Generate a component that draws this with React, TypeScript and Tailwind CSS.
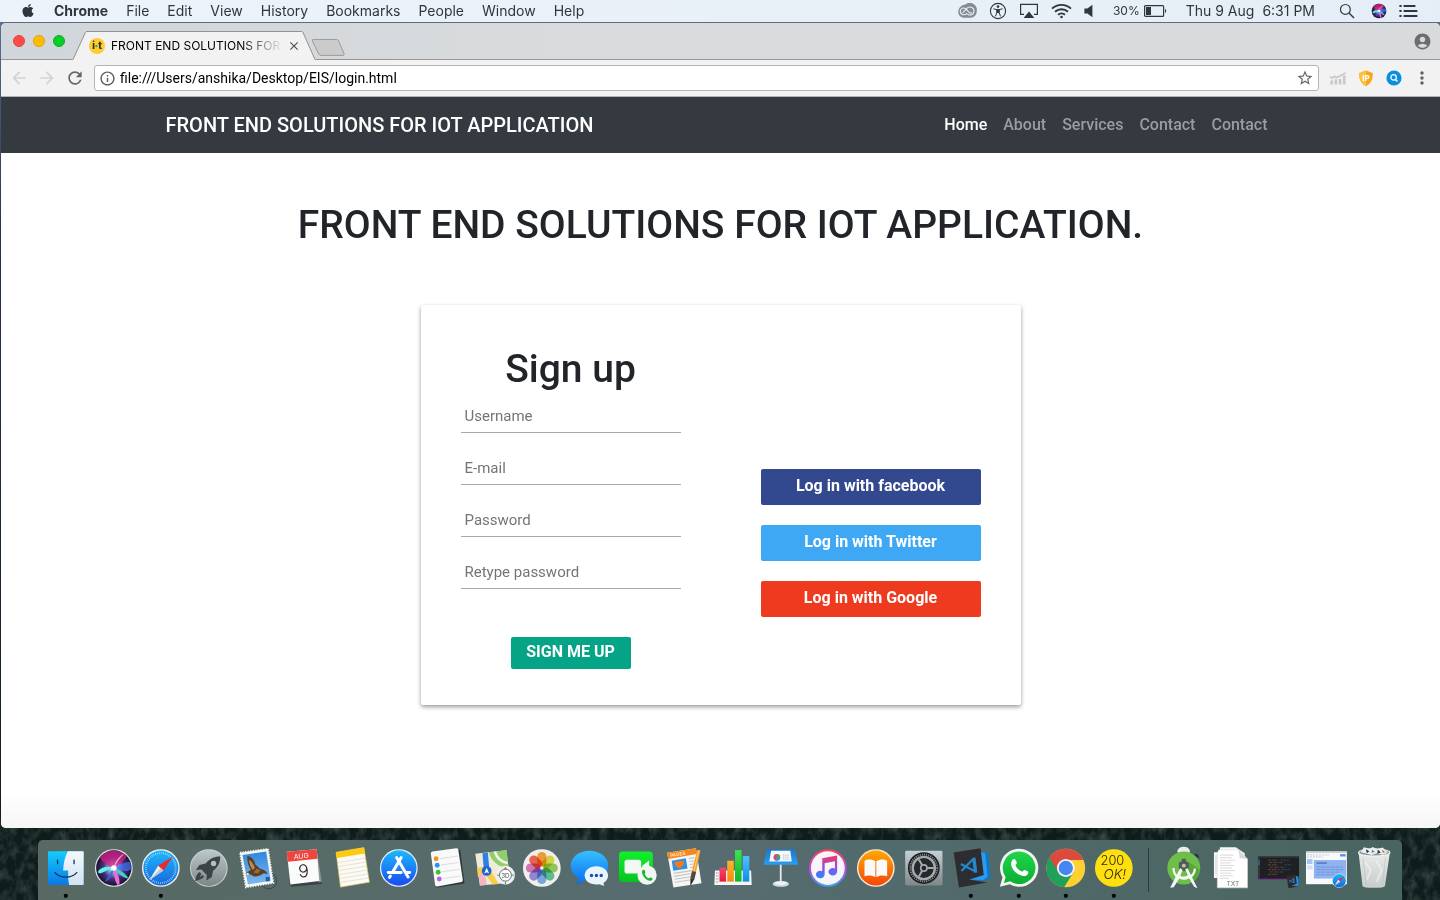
import type { ReactNode } from "react";
import { FaApple } from "react-icons/fa";
import {
  MdAccountCircle,
  MdArrowBack,
  MdArrowForward,
  MdClose,
  MdInfoOutline,
  MdMoreVert,
  MdRefresh,
  MdStarBorder,
} from "react-icons/md";

/* ---------- shared gradients ---------- */

function Grad({ id, stops }: { id: string; stops: string[] }) {
  return (
    <linearGradient id={id} x1="0" y1="0" x2="0" y2="1">
      {stops.map((c, i) => (
        <stop key={c + i} offset={i / (stops.length - 1)} stopColor={c} />
      ))}
    </linearGradient>
  );
}

function Defs() {
  return (
    <svg width="0" height="0" className="absolute" aria-hidden="true">
      <defs>
        <Grad id="finderL" stops={["#12cdff", "#0a78e4"]} />
        <Grad id="finderR" stops={["#f4f8fc", "#d3e2f3"]} />
        <Grad id="safari" stops={["#1fb6fb", "#1668dc"]} />
        <Grad id="silver" stops={["#bcc7cb", "#7d8687"]} />
        <Grad id="sky" stops={["#2f86dd", "#7fb9ee"]} />
        <Grad id="store" stops={["#1bb8fd", "#1b4bf0"]} />
        <Grad id="msg" stops={["#35c0ff", "#0a6cf0"]} />
        <Grad id="ft" stops={["#12ef2e", "#07c41f"]} />
        <Grad id="pink" stops={["#f5486d", "#e6173c"]} />
        <Grad id="amber" stops={["#ffb52e", "#f38b0d"]} />
        <Grad id="green" stops={["#3de34e", "#0fb32e"]} />
        <Grad id="azure" stops={["#4fc4ff", "#0f8ae8"]} />
        <Grad id="board" stops={["#1878cf", "#2b9cf0"]} />
        <Grad id="books" stops={["#ffa800", "#f4470b"]} />
        <Grad id="prefs" stops={["#c5d0d6", "#80878a"]} />
        <Grad id="wa" stops={["#1fd64a", "#0cae32"]} />
        <Grad id="note" stops={["#f23a5c", "#9b49e8", "#1f8df5"]} />
        <Grad id="ring" stops={["#f4425b", "#c344e0", "#38a6f5"]} />
        <Grad id="trash" stops={["#e8eaea", "#c9cccc"]} />
        <radialGradient id="siriDisc">
          <stop offset="0" stopColor="#ffffff" />
          <stop offset="0.22" stopColor="#9fc5f0" />
          <stop offset="0.6" stopColor="#4a2f7c" />
          <stop offset="1" stopColor="#15142c" />
        </radialGradient>
        <clipPath id="siriClip">
          <circle cx="24" cy="28" r="17.4" />
        </clipPath>
        <clipPath id="chromeClip">
          <circle cx="24" cy="28" r="19.5" />
        </clipPath>
      </defs>
    </svg>
  );
}

/* ---------- reusable drawings ---------- */

function SiriOrb() {
  return (
    <>
      <circle cx="24" cy="28" r="19" fill="#e4e1ea" />
      <circle cx="24" cy="28" r="17.8" fill="url(#siriDisc)" />
      <g clipPath="url(#siriClip)">
        <path d="M24 28C17 26 9 20 8 12C16 7 32 7 38 15C34 21 29 26 24 28Z" fill="#d81f86" opacity=".75" />
        <path d="M24 28C32 24 40 19 43 24C43 32 36 33 24 28Z" fill="#3b6df0" opacity=".75" />
        <path d="M24 28C16 30 9 36 8 32C10 27 17 26 24 28Z" fill="#5ff3e6" />
        <path d="M24 28C24 36 25 42 29 47C31 42 29 34 24 28Z" fill="#f26ad6" />
        <path d="M24 28C30 30 36 33 39 39C33 38 27 33 24 28Z" fill="#3fd0c9" />
        <path d="M24 28C20 33 17 37 15 42C21 40 24 34 24 28Z" fill="#3a63d8" opacity=".8" />
        <path d="M24 28C27 22 30 18 35 13C31 15 25 20 24 28Z" fill="#fff" opacity=".6" />
      </g>
      <circle cx="24" cy="28" r="2.8" fill="#fff" />
    </>
  );
}

function Compass({ ticks = true }: { ticks?: boolean }) {
  return (
    <>
      <circle cx="24" cy="28" r="19" fill="#eef1f4" />
      <circle cx="24" cy="28" r="17.6" fill="url(#safari)" />
      {ticks && (
        <circle cx="24" cy="28" r="15" fill="none" stroke="#cfeaff" strokeWidth="2" strokeDasharray="0.6 1.36" />
      )}
      <path d="M36 16.5L21.3 25.6L26.6 30.6Z" fill="#f3262c" />
      <path d="M12.5 40L21.3 25.6L26.6 30.6Z" fill="#f2f2f2" />
      <path d="M12.5 40L24 28L26.6 30.6Z" fill="#c5c9cc" />
    </>
  );
}

function CodeMark() {
  return (
    <>
      <path d="M33.5 11.8L41.5 12L43.9 36.5L43 38.8L35.5 41L23 40L35.3 35.5Z" fill="#1177c4" />
      <path d="M6.7 12.3L33.7 8L39.8 37L35.3 36.5L22 39.6L40.7 42.7L12 47.7Z" fill="#2d2d31" />
      <path d="M34.3 11.8L38.5 13L41 37L36.5 40L23 39.6L37 35Z" fill="#2b9af0" />
      <g fill="none" stroke="#2489ca" strokeLinejoin="round">
        <path d="M27 17.6L28.8 32.6" strokeWidth="3.4" />
        <path d="M26.6 18.6L14.6 31M14 24L28.4 31.4" strokeWidth="2.2" />
      </g>
    </>
  );
}

/* ---------- dock artwork, drawn on a 48 x 60 grid ---------- */

const petals = ["#fb9a1f", "#d9dd2d", "#8ecb4a", "#4fbf8d", "#6ea6e6", "#8a7fd6", "#d76bb4", "#f2573c"];
const angles8 = [0, 45, 90, 135, 180, 225, 270, 315];
const angles3 = [0, 120, 240];

type DockItem = { name: string; running?: boolean; art: ReactNode };

const apps: DockItem[] = [
  {
    name: "Finder",
    running: true,
    art: (
      <>
        <rect x="6" y="11" width="36" height="34" rx="1" fill="url(#finderL)" />
        <path d="M26 11H41Q42 11 42 12V44Q42 45 41 45H27.3C26.4 41 26.2 35 26.4 30.5H21.3C21.5 23 23.4 16 26 11Z" fill="url(#finderR)" />
        <path d="M15.7 20V23.6M32.3 20V23.6" stroke="#16324f" strokeWidth="1.3" strokeLinecap="round" />
        <path d="M13 32.6C18.5 38.8 29.5 38.8 35 32.6" stroke="#16324f" strokeWidth="1.3" fill="none" strokeLinecap="round" />
      </>
    ),
  },
  { name: "Siri", art: <SiriOrb /> },
  { name: "Safari", running: true, art: <Compass /> },
  {
    name: "Launchpad",
    art: (
      <>
        <circle cx="24" cy="28" r="19" fill="#c9d3d6" />
        <circle cx="24" cy="28" r="18" fill="url(#silver)" />
        <path d="M35.5 16.5C29 16.5 24.5 19 21 23.5L14.5 25L11 30L16.5 29.5L22 35L21.5 40.5L27 37L28.2 31C33 27.5 35.5 23 35.5 16.5Z" fill="#3d4346" />
        <circle cx="28.8" cy="23.4" r="2.7" fill="#b5bfc2" />
        <path d="M14.6 32C12 33.5 11 36.5 10.2 41C14.5 40.2 17.5 39 19.2 36.5L17.6 35L14.8 37.2L16.4 33.6Z" fill="#3d4346" />
      </>
    ),
  },
  {
    name: "Mail",
    art: (
      <>
        <circle cx="36" cy="41" r="8" fill="none" stroke="#394c49" strokeWidth="1" />
        <path d="M7 12.5L35.3 8.7L40.6 43L13 47.5Z" fill="#f6f7f7" stroke="#f6f7f7" strokeWidth="1.8" strokeDasharray="1.3 1.3" />
        <path d="M9.5 14.8L33.4 11.3L38 40.8L15 44.6Z" fill="url(#sky)" />
        <path d="M14.5 16C19 16.5 21.5 20 22.6 24.6C24.6 25.6 26 28 28 29C31 29.6 33.4 31 35 34L31 33.4C28.6 34.4 26.6 36.4 23 36.6C20 36.4 18 34.4 16 34L13.5 35.5L13.6 32.5L18 30C15.4 25.6 14 21 14.5 16Z" fill="#5c3f22" />
        <path d="M16 19.6C19 21.6 21 24 22 28L20 30C17.6 27 16.4 23.6 16 19.6Z" fill="#b98c56" />
        <path d="M24 28.4L27.6 30.4L25 33.6L20.5 32.6Z" fill="#9b6b36" />
        <circle cx="14.8" cy="34" r="1.2" fill="#f2ead8" />
        <rect x="33" y="37" width="4" height="4.4" fill="#2459a6" />
      </>
    ),
  },
  {
    name: "Calendar",
    art: (
      <>
        <path d="M9 43L38.5 39.5L42.4 41.8L41.8 44L11.4 47Z" fill="#384447" />
        <path d="M37 9.5L42 41.5L39 42.5L35 12Z" fill="#8d9698" />
        <path d="M6.8 11.6L37 9.2L39.6 41L10.5 44.6Z" fill="#fbfbfb" />
        <path d="M6.8 11.6L37 9.2L37.8 18.6L7.8 21.6Z" fill="#f0443d" />
        <g transform="rotate(-5 23 28)">
          <text x="22.4" y="18.4" textAnchor="middle" fontFamily="Inter, sans-serif" fontSize="7" fill="#fff">AUG</text>
          <text x="23.5" y="37.4" textAnchor="middle" fontFamily="Inter, sans-serif" fontSize="18" fontWeight="300" fill="#222">9</text>
        </g>
      </>
    ),
  },
  {
    name: "Notes",
    art: (
      <>
        <path d="M8 12L36.2 7.3L41.8 42.3L12.5 47.3Z" fill="#fbfaf3" stroke="#d8b13a" strokeWidth=".6" />
        <path d="M8 12L36.2 7.3L37.2 13.4L8.9 17.8Z" fill="#fccb12" />
        <path d="M10 22.5L37.8 18M10.6 26.5L38.5 22M11.2 30.5L39.2 26M11.8 34.5L39.8 30M12.3 38.5L40.4 34M12.9 42.5L41 38" stroke="#dcd8ca" strokeWidth=".7" />
      </>
    ),
  },
  {
    name: "App Store",
    art: (
      <>
        <circle cx="24" cy="28" r="19" fill="#e9f4fc" />
        <circle cx="24" cy="28" r="17.8" fill="url(#store)" />
        <g stroke="#fff" strokeWidth="3" strokeLinecap="round" fill="none">
          <path d="M21.8 17.5L33.3 37" />
          <path d="M26.4 17.5L17.6 32.4" />
          <path d="M13.3 32.6H26.4M31.6 32.6H35" />
          <path d="M15.5 36L14.7 37.4" />
        </g>
      </>
    ),
  },
  {
    name: "Reminders",
    art: (
      <>
        <path d="M10 13.5L37.5 9.5L41.8 43.5L13.5 48Z" fill="#2e3a3b" />
        <path d="M9.5 11.3L33.5 8.1Q35.2 8 35.5 9.4L40.1 40.2Q40.3 41.8 38.8 42.1L14.4 46.6Q12.6 46.8 12.2 45.2L7.9 13.4Q7.7 11.6 9.5 11.3Z" fill="#fafafa" />
        <path d="M17 18.5L35 16M18 25L36 22.4M19 31.8L37 29.2M20 38.6L38 36" stroke="#cfcfcf" strokeWidth=".7" />
        <circle cx="13.2" cy="18.6" r="2.5" fill="#f7901e" />
        <circle cx="14.3" cy="25.3" r="2.5" fill="#1e9bf0" />
        <circle cx="15.3" cy="32.2" r="2.5" fill="#2ccb26" />
        <circle cx="16.4" cy="39" r="2.5" fill="#c35fe6" />
      </>
    ),
  },
  {
    name: "Maps",
    art: (
      <>
        <path d="M4.3 13.7L35.7 10L39.7 42.7L9 45.7Z" fill="#f0ead9" />
        <path d="M18 12.1L35.7 10L38 28C27 27 20 21 18 12.1Z" fill="#8ed16a" />
        <path d="M24 11.4C26 18 31 22 37 23" stroke="#f4f2ea" strokeWidth="2.6" fill="none" />
        <path d="M6 28L17 26L28 44L22 44.5L14 34L7 37Z" fill="#f9ce46" />
        <path d="M7.4 34L14 33L16 45L9 45.7Z" fill="#f5b6c4" />
        <path d="M11.5 13L17 12.3L18.5 29L13 30Z" fill="#2e7fe6" />
        <circle cx="15.8" cy="31" r="4.9" fill="#1d63d6" />
        <path d="M15.8 27.8L18.3 33.6L15.8 32.3L13.3 33.6Z" fill="#fff" />
        <circle cx="34.7" cy="35.2" r="9.5" fill="#eef0f0" />
        <circle cx="34.7" cy="35.2" r="6" fill="#fff" stroke="#586064" strokeWidth=".9" />
        <text x="34.7" y="37.6" textAnchor="middle" fontFamily="Inter, sans-serif" fontSize="6.4" fill="#4a5257">3D</text>
        <path d="M34.7 26.6L36 29.2H33.4Z" fill="#e23b2f" />
        <path d="M34.7 41.8V44M26.3 35.2H28M41.4 35.2H43.2" stroke="#4a5257" strokeWidth=".8" />
      </>
    ),
  },
  {
    name: "Photos",
    art: (
      <>
        <circle cx="24" cy="28" r="19" fill="#f1efee" />
        {angles8.map((a, i) => (
          <rect
            key={a}
            x="19.4"
            y="11.9"
            width="9.2"
            height="14.6"
            rx="4.6"
            fill={petals[i]}
            opacity=".88"
            className="mix-blend-multiply"
            transform={`rotate(${a} 24 28)`}
          />
        ))}
      </>
    ),
  },
  {
    name: "Messages",
    art: (
      <>
        <path d="M23.6 10.5C34.4 10.5 42.6 17 42.6 25.8S34.4 41.2 23.6 41.2C21.4 41.2 19.4 41 17.6 40.4C15.6 43 13 44.6 10.2 44.6C12 42.6 12.6 40.4 12.4 37.9C7.7 35.2 4.7 30.8 4.7 25.8C4.7 17 12.9 10.5 23.6 10.5Z" fill="url(#msg)" />
        <path d="M30.6 26.2C37.4 26.2 42.4 30.4 42.4 35.6C42.4 38.6 40.6 41.4 37.8 43C37.8 44.2 38 45 38.6 46C36.8 45.6 35.2 44.8 34.2 44.3C33 44.6 31.8 44.7 30.6 44.7C23.8 44.7 18.8 40.8 18.8 35.6S23.8 26.2 30.6 26.2Z" fill="#e9f3fd" />
        <circle cx="25.7" cy="35.5" r="1.7" fill="#1c4fa3" />
        <circle cx="30.6" cy="35.5" r="1.7" fill="#1c4fa3" />
        <circle cx="35.5" cy="35.5" r="1.7" fill="#1c4fa3" />
      </>
    ),
  },
  {
    name: "FaceTime",
    art: (
      <>
        <rect x="5" y="11.3" width="34.2" height="30.7" rx="3.6" fill="url(#ft)" />
        <rect x="10.6" y="19.6" width="16.8" height="14" rx="2.6" fill="#f4f8f4" />
        <path d="M28.6 25.4L35.4 20.4V33H28.6Z" fill="#f4f8f4" />
        <circle cx="33.3" cy="35.2" r="9.7" fill="#f3f5f3" />
        <path d="M28.4 30.8C29.6 29.2 30.6 29.6 31.4 31.4C32 32.6 30.6 33.2 31 34.2C31.8 36 32.8 37.2 34.6 38.2C35.6 38.6 36 37 37.2 37.6C39 38.4 39.4 39.2 38 40.4C34.6 43 27 35.4 28.4 30.8Z" fill="#12b52b" />
      </>
    ),
  },
  {
    name: "Pages",
    art: (
      <>
        <path d="M6.2 12.7L35.2 8L40.8 43.3L12.5 47.7Z" fill="#f5f5f3" />
        <path d="M6.2 12.7L35.2 8L36 14L7.2 18.8Z" fill="#f7861b" />
        <text x="9.5" y="17.2" fontFamily="Inter, sans-serif" fontSize="4.8" fontWeight="600" fill="#fde5cc" transform="rotate(-9 9 17)">PAGES</text>
        <path d="M10.8 20.6L25 18.2L26.7 28.4L12.4 30.7Z" fill="#2f8fe6" />
        <path d="M13.4 22L22.6 20.8L23.4 24L19 28.6L14.6 26Z" fill="#f47a1c" />
        <path d="M28 18.5L34 17.6M28.4 21.5L34.4 20.6M28.8 24.5L34.6 23.6M29.4 27.6L35 26.8M12.8 33.4L31 30.6M13.2 36.4L30.4 33.6M13.7 39.4L30 36.8M14.2 42.4L29 40" stroke="#c4c4c4" strokeWidth="1.1" />
        <path d="M36.6 9.6L39.9 10.3L33.6 39.4L29.6 38.4Z" fill="#f59a23" />
        <path d="M37.6 9.8L38.6 10L32 39L31 38.7Z" fill="#ffd185" />
        <path d="M29.6 38.4L33.6 39.4L29.6 46Z" fill="#2e2e2e" />
        <path d="M31.3 31L35.3 32L33.6 39.4L29.6 38.4Z" fill="#4a4a4a" />
      </>
    ),
  },
  {
    name: "Numbers",
    art: (
      <>
        <path d="M6 30.5H42.4L43 45H5.4Z" fill="#f5f5f5" />
        <path d="M7 33H10M7 36H10M7 39H10M7 42H10" stroke="#888" strokeWidth="1" strokeDasharray="1 .6" />
        <rect x="10.6" y="27.7" width="6.6" height="14" fill="url(#pink)" />
        <rect x="18.4" y="20.7" width="6.6" height="21" fill="url(#amber)" />
        <rect x="26.2" y="10" width="6.6" height="31.7" fill="url(#green)" />
        <rect x="34" y="16" width="6.6" height="25.7" fill="url(#azure)" />
      </>
    ),
  },
  {
    name: "Keynote",
    art: (
      <>
        <ellipse cx="24" cy="44" rx="8.2" ry="3" fill="#cfdbe6" />
        <ellipse cx="24" cy="43.2" rx="6" ry="1.8" fill="#eef4f8" />
        <rect x="23" y="24" width="1.8" height="19" fill="#e4eaee" />
        <path d="M9.8 9H38L41.3 23.4V24.8H6.9V23.4Z" fill="url(#board)" />
        <path d="M14.2 10.6H33.6L35 21.4H12.4Z" fill="#f8fafc" />
        <circle cx="20" cy="17.2" r="3.4" fill="#ec4063" />
        <path d="M20 17.2V13.8A3.4 3.4 0 0 1 23.2 18Z" fill="#39b54a" />
        <path d="M20 17.2L23.2 18A3.4 3.4 0 0 1 18 20Z" fill="#2d9cf0" />
        <path d="M26 15H32M26 17H32.4M26 19H32.8" stroke="#a9b7c2" strokeWidth=".8" strokeDasharray="1.6 .6" />
      </>
    ),
  },
  {
    name: "iTunes",
    art: (
      <>
        <circle cx="24" cy="28" r="19" fill="url(#ring)" />
        <circle cx="24" cy="28" r="17" fill="#f8f5f8" />
        <path d="M18.4 18.2L33.4 15.4V31.6A4.4 3.8 0 1 1 31.2 28.4V21.2L20.8 23.2V34.4A4.4 3.8 0 1 1 18.4 31.2Z" fill="url(#note)" />
      </>
    ),
  },
  {
    name: "iBooks",
    art: (
      <>
        <circle cx="24" cy="28" r="19" fill="#f7e9d8" />
        <circle cx="24" cy="28" r="17.6" fill="url(#books)" />
        <path d="M23.5 21.2C20.5 19 15.5 18.9 12.6 20.6V36.4C16 35 20.8 35.2 23.5 37.4Z" fill="#fafafa" />
        <path d="M24.5 21.2C27.5 19 32.5 18.9 35.4 20.6V36.4C32 35 27.2 35.2 24.5 37.4Z" fill="#fafafa" />
      </>
    ),
  },
  {
    name: "System Preferences",
    art: (
      <>
        <rect x="5.2" y="10.6" width="37.6" height="35" rx="1.4" fill="url(#prefs)" />
        <circle cx="24" cy="28" r="16" fill="#1d2022" />
        <circle cx="24" cy="28" r="13.6" fill="none" stroke="#8b9194" strokeWidth="1.8" strokeDasharray="1.1 1.1" />
        <circle cx="24" cy="28" r="11.2" fill="#26292b" stroke="#a5abae" strokeWidth="2.4" />
        {angles3.map((a) => (
          <path key={a} d="M24 28H34" stroke="#a5abae" strokeWidth="2" transform={`rotate(${a} 24 28)`} />
        ))}
        <circle cx="24" cy="28" r="3.2" fill="#24272a" stroke="#a5abae" strokeWidth="1.6" />
      </>
    ),
  },
  { name: "Visual Studio Code", running: true, art: <CodeMark /> },
  {
    name: "WhatsApp",
    running: true,
    art: (
      <>
        <path d="M24.2 8.6A19.2 19.2 0 1 1 14.8 44.4L4.9 47L7.6 37.4A19.2 19.2 0 0 1 24.2 8.6Z" fill="#f2f5f2" />
        <path d="M24.2 11.4A16.4 16.4 0 1 1 15.2 41.4L9 43L10.7 37A16.4 16.4 0 0 1 24.2 11.4Z" fill="url(#wa)" />
        <path d="M17.4 19.8C18.8 18.4 20.4 18.8 21.2 20.8C22.2 23.2 22.2 23.4 20.8 25C20.2 25.8 23.8 30.6 27.4 31.6C28 31.6 29 29.6 30 30C33.6 31.4 33.8 31.6 33.4 33.2C32.8 35.4 30.2 36.4 28 36C20.6 34.6 13.4 26 17.4 19.8Z" fill="#fff" />
      </>
    ),
  },
  {
    name: "Google Chrome",
    running: true,
    art: (
      <>
        <g clipPath="url(#chromeClip)">
          <rect x="4" y="8" width="40" height="40" fill="#fdd033" />
          <path d="M24 28L5 13L4 48H22L32 32Z" fill="#1fa15c" />
          <path d="M24 20H46V6H6V16L16.5 32Z" fill="#dc4a3d" />
          <path d="M24 28L16 32L5 14V40Z" fill="#1fa15c" />
        </g>
        <circle cx="24" cy="28" r="9" fill="#f5f5f5" />
        <circle cx="24" cy="28" r="7.2" fill="#4487f0" />
      </>
    ),
  },
  {
    name: "200 OK",
    running: true,
    art: (
      <>
        <circle cx="24" cy="28" r="19" fill="#ffdf0f" />
        <g fontFamily="Inter, sans-serif" fontWeight="300" fill="#2c2a12" textAnchor="middle">
          <text x="22.6" y="25" fontSize="13">200</text>
          <text x="25" y="39" fontSize="13.5" fontStyle="italic">OK!</text>
        </g>
      </>
    ),
  },
];

const shelf: DockItem[] = [
  {
    name: "Android Studio",
    art: (
      <>
        <path d="M17.5 11C18 8 21 6.6 24 6.6S29.6 8 30.2 11L28.6 15H19Z" fill="#e8ecea" />
        <path d="M34 13.6L38 14.4L39.8 17.6L36.4 17Z" fill="#262c46" />
        <circle cx="24" cy="28" r="16.6" fill="#6fbe48" />
        <path d="M24 28L29 22L40.4 30A16.6 16.6 0 0 1 31 43Z" fill="#4f9a37" opacity=".7" />
        <path d="M22 18.6H26V21L29 22.6V28.4L26 31H22L19 28.4V22.6L22 21Z" fill="#525a5c" />
        <circle cx="24" cy="25.6" r="2" fill="#a9cf95" />
        <path d="M20.4 28L10.2 48L13.8 47.4L19.4 38.6C22.6 40.4 26.2 40.2 29.2 38.2L34.4 47L37.8 48.4L27.6 28L25.4 29.6L28 35.4C25.6 37 22.6 37 20.4 35.8L22.8 30Z" fill="#f5f6f6" />
        <path d="M13.6 28C13.4 33 16 36.4 19.4 38.6M29.2 38.2C32.6 36 35 32 35.2 28.6" stroke="#f5f6f6" strokeWidth="2.2" fill="none" />
      </>
    ),
  },
  {
    name: "Documents",
    art: (
      <>
        <path d="M13 7H29L38 13V38H7V12H13Z" fill="#f7f7f7" />
        <path d="M12 9.6H31.6L40.8 19V48H10.4V12.6Z" fill="#fff" stroke="#d9d9d9" strokeWidth=".6" />
        <path d="M31.6 9.6L33 18L40.8 19Z" fill="#d8d8d8" />
        <path d="M13 15H27M13 17.6H25M13 20.2H28M13 22.8H24M13 25.4H27M13 28H25M13 30.6H28M13 33.2H24M13 35.8H26M13 38.4H22M9 15V34" stroke="#d4d4d4" strokeWidth=".9" />
        <text x="26" y="46" textAnchor="middle" fontFamily="Inter, sans-serif" fontSize="6.6" fill="#777">TXT</text>
      </>
    ),
  },
  {
    name: "Minimised editor window",
    art: (
      <>
        <rect x="3" y="16" width="41.4" height="24" fill="#1f2024" />
        <rect x="3" y="16" width="41.4" height="1.4" fill="#3b3c42" />
        <rect x="3" y="17.4" width="2" height="21.4" fill="#33353b" />
        <rect x="3" y="38.8" width="41.4" height="1.2" fill="#7c3a8f" />
        <path d="M13 20H24M14 22.4H28M13 24.8H22M15 27.2H30M13 29.6H25M15 32H28M13 34.4H22" stroke="#6f4a3e" strokeWidth=".8" strokeDasharray="3 1 5 1.4" />
        <path d="M26 20H34M30 24.8H37M27 29.6H36" stroke="#35597a" strokeWidth=".8" strokeDasharray="2 1" />
        <path d="M4 20V25" stroke="#3a7fc0" strokeWidth="1" />
        <g transform="translate(29.6 32.2) scale(.34)">
          <CodeMark />
        </g>
      </>
    ),
  },
  {
    name: "Minimised browser window",
    art: (
      <>
        <rect x="3" y="11.3" width="41.2" height="33" fill="#f7f9fc" />
        <rect x="3" y="11.3" width="41.2" height="1.6" fill="#cfcfcf" />
        <path d="M4 14.8H26M4 16.8H20" stroke="#b9bfca" strokeWidth=".8" strokeDasharray="2 1" />
        <rect x="37.4" y="14" width="5.6" height="2.4" fill="#5b8def" />
        <rect x="4" y="19" width="5.6" height="5" fill="#a8c3f5" />
        <rect x="4" y="25.4" width="5.6" height="4" fill="#d7e1f5" />
        <rect x="11" y="20" width="32.4" height="18.6" fill="#8fb2f2" />
        <path d="M13.6 23H24" stroke="#4a67a8" strokeWidth="1.2" />
        <path d="M13.6 27H40M13.6 29.6H41M13.6 32.2H38M13.6 34.8H40" stroke="#6d8dd0" strokeWidth=".8" strokeDasharray="4 .8" />
        <g transform="translate(27.4 30.2) scale(.38)">
          <Compass ticks={false} />
        </g>
      </>
    ),
  },
  {
    name: "Trash",
    art: (
      <>
        <path d="M8.6 12.4L12.6 46Q13.2 48 24 48T35.2 46L40.2 12.4Z" fill="url(#trash)" />
        <ellipse cx="24.4" cy="12.4" rx="15.8" ry="3.6" fill="#8c9494" stroke="#f1f3f3" strokeWidth="1.2" />
        <path d="M11 12L14 7L20 8.6L23 6.8L27 9L33 7.4L38 12.6L33 14.6L27 13L22 15L16 13.4Z" fill="#eceeee" />
        <path d="M16 9L19.4 11L17 13Z M28 9.4L31 12.4L27.6 13.6Z" fill="#2c3438" />
        <path d="M22.4 9.6L25 11.8L21.6 12.6Z" fill="#4a86b0" />
        <path d="M32.4 9.4L35.4 12L33 12.6Z" fill="#c9603b" />
        <path d="M13 18L16.4 45M35.8 18L32.6 45" stroke="#b4b8b8" strokeWidth=".8" opacity=".6" />
        <path d="M15 22L21 30L17 40M26 20L32 30L27 42" stroke="#f3f4f4" strokeWidth="2" fill="none" opacity=".6" />
      </>
    ),
  },
];

function DockIcon({ item }: { item: DockItem }) {
  return (
    <button type="button" aria-label={item.name} className="block min-w-0 flex-1">
      <svg viewBox="0 0 48 60" className="block h-[60px] w-full" aria-hidden="true">
        {item.art}
        {item.running && <circle cx="24" cy="56" r="2.1" fill="#000" />}
      </svg>
    </button>
  );
}

function Dock() {
  return (
    <nav
      aria-label="Dock"
      className="relative mx-[38px] mt-3 flex rounded-t-[5px] bg-linear-to-r from-[#576962] via-[#566c70] to-[#496560] px-1"
    >
      {apps.map((a) => (
        <DockIcon key={a.name} item={a} />
      ))}
      <div className="flex w-[22px] shrink-0 items-center justify-center">
        <span className="h-11 w-px bg-[#2c3d3b]" />
      </div>
      {shelf.map((a) => (
        <DockIcon key={a.name} item={a} />
      ))}
    </nav>
  );
}

/* ---------- menu bar ---------- */

const menus = ["File", "Edit", "View", "History", "Bookmarks", "People", "Window", "Help"];

function MenuBar() {
  return (
    <header className="relative flex h-[23px] items-center justify-between border-b border-[#5b6c80] bg-linear-to-r from-[#edf3fa] to-[#e5eef6] pr-[22px] pl-5 text-sm whitespace-nowrap text-[#2f363d]">
      <div className="flex items-center gap-[18px]">
        <FaApple className="size-4 pb-px" aria-label="Apple menu" />
        <span className="font-bold">Chrome</span>
        {menus.map((m) => (
          <span key={m}>{m}</span>
        ))}
      </div>
      <div className="flex items-center">
        <div className="flex items-center gap-3">
          <svg width="20" height="16" viewBox="0 0 20 16" aria-hidden="true">
            <path d="M6.6 14.8A6.4 6.4 0 0 1 4 3.2A6.6 6.6 0 0 1 8.4 1.6A7 7 0 0 1 19.8 8A6.6 6.6 0 0 1 13.6 14.8Z" fill="#858b92" />
            <g fill="none" stroke="#e8eff7" strokeWidth="1.1" strokeLinecap="round">
              <path d="M9.8 10.6C7.6 12.8 3.4 11.8 3.2 8.4C3.2 5.2 6.8 4 9 6L12.4 9.6Q13.6 10.6 14.6 9.6" />
              <path d="M6 9.4L9.6 5.6C12 2.6 17.2 4.2 17 8.2C16.8 11.6 13 13.2 10.6 11.2" />
            </g>
          </svg>
          <svg width="18" height="18" viewBox="0 0 18 18" fill="none" stroke="#2f363d" aria-hidden="true">
            <circle cx="9" cy="9" r="7.6" strokeWidth="1.1" />
            <circle cx="9" cy="4.6" r="1.3" fill="#2f363d" stroke="none" />
            <path d="M4.8 6.9L7.8 7.6H10.2L13.2 6.9M7.8 7.6V10.6L6.6 14M10.2 7.6V10.6L11.4 14" strokeWidth="1" strokeLinecap="round" />
            <path d="M7.6 7.4H10.4V11H7.6Z" fill="#2f363d" stroke="none" />
          </svg>
          <svg width="20" height="16" viewBox="0 0 20 16" aria-hidden="true">
            <path d="M5 11.4H1.6V1.4H18.4V11.4H15" fill="none" stroke="#2f363d" strokeWidth="1.2" />
            <path d="M10 8.6L15.4 15H4.6Z" fill="#2f363d" />
          </svg>
          <svg width="21" height="16" viewBox="0 0 21 16" fill="none" stroke="#2f363d" strokeWidth="1.9" aria-hidden="true">
            <path d="M1 5.6C6.4 .6 14.6 .6 20 5.6" />
            <path d="M4 8.8C7.8 5.4 13.2 5.4 17 8.8" />
            <path d="M7 11.8C9 10 12 10 14 11.8" />
            <circle cx="10.5" cy="14" r="1.3" fill="#2f363d" stroke="none" />
          </svg>
          <svg width="9" height="14" viewBox="0 0 9 14" aria-hidden="true">
            <path d="M.4 4.6H3.4L8.4 .8V13.2L3.4 9.6H.4Z" fill="#2f363d" />
          </svg>
        </div>
        <span className="ml-5 text-xs">30%</span>
        <svg width="24" height="12" viewBox="0 0 24 12" className="ml-1" aria-hidden="true">
          <rect x=".6" y=".6" width="19" height="10.8" rx="1" fill="none" stroke="#2f363d" strokeWidth="1.2" />
          <rect x="2" y="2" width="5" height="8" fill="#2f363d" />
          <path d="M21 3.8Q23.4 6 21 8.2Z" fill="#2f363d" />
        </svg>
        <span className="ml-[18px]">Thu 9 Aug</span>
        <span className="ml-2">6:31 PM</span>
        <svg width="16" height="16" viewBox="0 0 16 16" className="ml-6" fill="none" stroke="#2f363d" aria-hidden="true">
          <circle cx="6.4" cy="6.4" r="4.9" strokeWidth="1.2" />
          <path d="M10 10L15 15" strokeWidth="1.4" />
        </svg>
        <svg width="16" height="16" viewBox="4.5 8.5 39 39" className="ml-4" aria-hidden="true">
          <SiriOrb />
        </svg>
        <svg width="19" height="14" viewBox="0 0 19 14" className="ml-3" aria-hidden="true">
          <path d="M.4 2H2.6M.4 7H2.6M.4 12H2.6M4.6 2H16.4M4.6 7H18.4M4.6 12H18.4" stroke="#2f363d" strokeWidth="1.9" />
        </svg>
      </div>
    </header>
  );
}

/* ---------- browser chrome ---------- */

function TabStrip() {
  return (
    <div className="flex h-[37px] items-end border-b border-[#959799] bg-linear-to-r from-[#d1d6db] via-[#d9dbdc] via-40% to-[#d9dadb]">
      <div className="flex gap-2 self-center pl-3">
        <span className="size-3 rounded-full border border-[#e2443c] bg-[#fc4b48]" />
        <span className="size-3 rounded-full border border-[#e6a200] bg-[#fdbb02]" />
        <span className="size-3 rounded-full border border-[#0cae1f] bg-[#04cf28]" />
      </div>
      <div className="relative -mb-px ml-2 flex h-[29px] w-[242px] items-center pr-[14px] pl-4">
        <svg viewBox="0 0 242 29" className="absolute inset-0" width="242" height="29" aria-hidden="true">
          <path d="M0 28.5L12.4 1.5Q12.8 .5 14 .5H228.4Q229.6 .5 230 1.5L242 28.5V29H0Z" fill="#f2f2f2" />
          <path d="M0 28.5L12.4 1.5Q12.8 .5 14 .5H228.4Q229.6 .5 230 1.5L242 28.5" fill="none" stroke="#8f9193" />
        </svg>
        <svg viewBox="0 0 16 16" width="16" height="16" className="relative shrink-0" aria-hidden="true">
          <circle cx="8" cy="8" r="8" fill="#fecd2f" />
          <text x="8" y="11.3" textAnchor="middle" fontFamily="Inter, sans-serif" fontSize="9.5" fontWeight="800" fill="#2b2b20">i·t</text>
          <circle cx="7.6" cy="8.2" r="1" fill="#2bb5a0" />
        </svg>
        <span className="relative ml-[6px] min-w-0 flex-1 overflow-hidden mask-r-from-75% text-xs whitespace-nowrap text-black">
          FRONT END SOLUTIONS FOR IOT APPLICATION
        </span>
        <button type="button" aria-label="Close tab" className="relative ml-1 text-[#4d4f52]">
          <MdClose size={14} />
        </button>
      </div>
      <button type="button" aria-label="New tab" className="mb-[3px] -ml-[3px]">
        <svg width="34" height="17" viewBox="0 0 34 17" className="block" aria-hidden="true">
          <path d="M1 .5H24.6Q26 .5 26.6 1.8L32 14.6Q32.6 16.4 31 16.4H8.8Q7.4 16.4 6.8 15L.3 2Q-.2 .5 1 .5Z" fill="#cbcbcb" stroke="#9b9c9d" />
        </svg>
      </button>
      <button type="button" aria-label="Profile" className="mr-2 ml-auto self-center text-[#6b6d73]">
        <MdAccountCircle size={19} />
      </button>
    </div>
  );
}

function Toolbar() {
  return (
    <div className="flex h-[37px] items-center gap-2 border-b border-[#b3b3b3] bg-[#f2f2f2] px-2">
      <button type="button" aria-label="Back" className="text-[#d3d3d4]">
        <MdArrowBack size={20} />
      </button>
      <button type="button" aria-label="Forward" className="text-[#d3d3d4]">
        <MdArrowForward size={20} />
      </button>
      <button type="button" aria-label="Reload" className="text-[#64666b]">
        <MdRefresh size={20} />
      </button>
      <div className="mx-px flex h-[26px] min-w-0 flex-1 items-center rounded-[3px] border border-[#b4b4b4] bg-white pr-1 pl-1">
        <MdInfoOutline size={17} className="shrink-0 text-[#5a5c60]" aria-hidden="true" />
        <input
          aria-label="Address"
          defaultValue="file:///Users/anshika/Desktop/EIS/login.html"
          className="ml-1 min-w-0 flex-1 font-[Roboto,sans-serif] text-sm text-black outline-none"
        />
        <button type="button" aria-label="Bookmark this page" className="text-[#64666b]">
          <MdStarBorder size={18} />
        </button>
      </div>
      <button type="button" aria-label="Analytics extension">
        <svg width="20" height="20" viewBox="0 0 20 20" fill="#c8c8c8" aria-hidden="true">
          <path d="M2 8L4 9L6.4 7.6L9 8.6L17.6 4V6L9 10.6L6.4 9.6L4 11L2 10Z" />
          <path d="M2.4 12.6H5V16.4H2.4ZM6.6 11.2H9.2V16.4H6.6ZM10.8 11H13.4V16.4H10.8ZM15 7.4H17.6V16.4H15Z" />
        </svg>
      </button>
      <button type="button" aria-label="IP extension">
        <svg width="20" height="20" viewBox="0 0 20 20" aria-hidden="true">
          <path d="M10 2.4L16.8 5C16.9 11 15.6 15 10 18.2C4.4 15 3.1 11 3.2 5Z" fill="#f9a51b" />
          <path d="M10 2.4L3.2 5C3.1 11 4.4 15 10 18.2Z" fill="#fbc23a" />
          <text x="10" y="12.8" textAnchor="middle" fontFamily="Inter, sans-serif" fontSize="8" fontWeight="800" fill="#fff">IP</text>
        </svg>
      </button>
      <button type="button" aria-label="Search extension">
        <svg width="20" height="20" viewBox="0 0 20 20" aria-hidden="true">
          <circle cx="10" cy="10" r="7.6" fill="#0a8fe0" />
          <circle cx="9.6" cy="9.4" r="2.7" fill="none" stroke="#fff" strokeWidth="1.2" />
          <path d="M11.4 11.4L13.4 13.4" stroke="#fff" strokeWidth="1.4" />
        </svg>
      </button>
      <button type="button" aria-label="Browser menu" className="text-[#5f6166]">
        <MdMoreVert size={20} />
      </button>
    </div>
  );
}

/* ---------- page ---------- */

const links = ["Home", "About", "Services", "Contact", "Contact"];

const fields = [
  { label: "Username", type: "text" },
  { label: "E-mail", type: "text" },
  { label: "Password", type: "password" },
  { label: "Retype password", type: "password" },
];

const socials = [
  { label: "Log in with facebook", tone: "bg-[#32498f]" },
  { label: "Log in with Twitter", tone: "bg-[#3fa8f4]" },
  { label: "Log in with Google", tone: "bg-[#ee3a1f]" },
];

function SiteNav() {
  return (
    <nav className="bg-[#343a40] px-4">
      <div className="mx-auto flex h-14 max-w-[1110px] items-center justify-between">
        <a href="#" className="text-xl font-medium text-white">
          FRONT END SOLUTIONS FOR IOT APPLICATION
        </a>
        <ul className="flex text-base font-medium">
          {links.map((l, i) => (
            <li key={i}>
              <a href="#" className={i === 0 ? "px-2 text-white" : "px-2 text-[#9a9da0]"}>
                {l}
              </a>
            </li>
          ))}
        </ul>
      </div>
    </nav>
  );
}

function SignupCard() {
  return (
    <section className="mx-auto mt-14 flex min-h-[400px] w-[600px] max-w-full gap-20 rounded-xs bg-white px-10 pt-10 pb-9 shadow-[0_2px_4px_rgba(0,0,0,0.4)]">
      <form className="flex flex-1 flex-col items-center" onSubmit={(e) => e.preventDefault()}>
        <h2 className="mb-2 text-[39px] leading-[48px] font-medium">Sign up</h2>
        <div className="flex w-full flex-col gap-5">
          {fields.map((f) => (
            <input
              key={f.label}
              type={f.type}
              aria-label={f.label}
              placeholder={f.label}
              className="h-8 w-full border-b border-[#aaaaaa] px-1 pb-0.5 text-[15px] outline-none placeholder:text-[#757575]"
            />
          ))}
        </div>
        <button
          type="submit"
          className="mt-12 h-8 w-[120px] rounded-xs bg-[#05a487] pb-[3px] text-base leading-none font-bold text-white"
        >
          SIGN ME UP
        </button>
      </form>
      <div className="flex flex-1 flex-col gap-5 pt-31">
        {socials.map((s) => (
          <button
            key={s.label}
            type="button"
            className={`h-9 rounded-xs pb-[3px] text-base leading-none font-bold text-white ${s.tone}`}
          >
            {s.label}
          </button>
        ))}
      </div>
    </section>
  );
}

function Wallpaper() {
  return (
    <svg className="absolute inset-x-0 bottom-0 h-20 w-full" preserveAspectRatio="none" aria-hidden="true">
      <defs>
        <filter id="forest" x="0" y="0" width="100%" height="100%">
          <feTurbulence type="fractalNoise" baseFrequency="0.12 0.08" numOctaves="4" seed="8" />
          <feColorMatrix values="0 0 0 0 0.15  0 0 0 0 0.22  0 0 0 0 0.19  1.5 0 0 0 -0.6" />
        </filter>
      </defs>
      <rect width="100%" height="100%" fill="#0f1c1c" />
      <rect width="100%" height="100%" filter="url(#forest)" opacity=".6" />
    </svg>
  );
}

export default function App() {
  return (
    <div className="relative flex min-h-screen flex-col overflow-hidden bg-linear-to-b from-[#5f7896] via-[#2b3450] via-25% to-[#0d1a1a] font-[Inter,sans-serif]">
      <Defs />
      <Wallpaper />
      <MenuBar />
      <main className="relative ml-px flex flex-1 flex-col overflow-hidden rounded-[5px] bg-white text-[#212529]">
        <TabStrip />
        <Toolbar />
        <div className="flex flex-1 flex-col font-[Roboto,sans-serif]">
          <SiteNav />
          <h1 className="mt-12 px-4 text-center text-[39px] leading-[48px] font-medium">
            FRONT END SOLUTIONS FOR IOT APPLICATION.
          </h1>
          <SignupCard />
          <div className="mt-auto h-9 bg-linear-to-b from-white to-[#f6f6f6]" />
        </div>
      </main>
      <Dock />
    </div>
  );
}
